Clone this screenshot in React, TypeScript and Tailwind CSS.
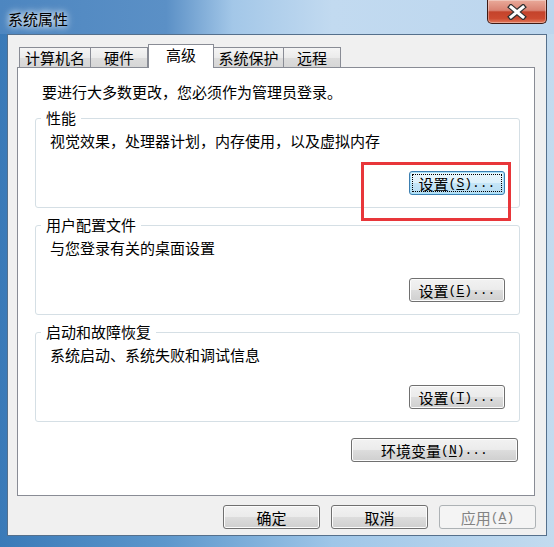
import type { ReactNode } from "react";

function Mn({ zh, k, tail = "..." }: { zh: string; k: string; tail?: string }) {
  return (
    <>
      <span>{zh}</span>
      <span className="font-['Liberation_Mono',monospace] text-[13px]">
        (<u className="underline-offset-2">{k}</u>){tail}
      </span>
    </>
  );
}

function WinButton({
  children,
  width,
  focused = false,
  disabled = false,
}: {
  children: ReactNode;
  width: string;
  focused?: boolean;
  disabled?: boolean;
}) {
  const look = disabled
    ? "border-[#adb2b5] bg-[#f4f4f4] text-[#838383]"
    : focused
      ? "border-[#3c7fb1] bg-[linear-gradient(180deg,#ebf7fd_0%,#dcf0fa_50%,#c6e6f7_50%,#b5dcf2_100%)] shadow-[inset_0_0_0_1px_#a9e2fa]"
      : "border-[#707070] bg-[linear-gradient(180deg,#f2f2f2_0%,#ebebeb_50%,#dddddd_50%,#cfcfcf_100%)] shadow-[inset_0_0_0_1px_#fcfcfc]";
  return (
    <button
      type="button"
      className={`relative h-[24px] ${width} rounded-[3px] border flex items-center justify-center leading-none ${look}`}
    >
      {focused && <span className="absolute inset-[2px] border border-dotted border-black" />}
      {children}
    </button>
  );
}

function Group({ title, desc, button }: { title: string; desc: string; button: ReactNode }) {
  return (
    <fieldset className="w-[485px] border border-[#d5dfe5] rounded-[3px] pb-[12px]">
      <legend className="ml-[5px] px-[5px] leading-[20px]">{title}</legend>
      <p className="pl-[14px] mt-[3px] leading-[20px]">{desc}</p>
      <div className="flex justify-end pr-[14px] mt-[20px]">{button}</div>
    </fieldset>
  );
}

const tabs = [
  { label: "计算机名", w: "w-[72px]", ml: "" },
  { label: "硬件", w: "w-[58px]", ml: "-ml-px" },
  { label: "高级", w: "w-[66px]", ml: "", active: true },
  { label: "系统保护", w: "w-[71px]", ml: "-ml-px" },
  { label: "远程", w: "w-[58px]", ml: "-ml-px" },
];

export default function App() {
  return (
    <div className="w-[554px] h-[547px] flex flex-col overflow-hidden bg-[linear-gradient(90deg,#3a7ab8_0%,#5d97cc_30%,#9fc6e8_60%,#c3dbef_100%)] font-['Noto_Sans_CJK_SC',sans-serif] text-[15px] text-black">
      {/* title bar */}
      <div className="h-[34px] flex items-start justify-between bg-[linear-gradient(90deg,#4d86c0_0%,#5b90c6_30%,#a3c7e8_42%,#c2daf0_60%,#bcd6ee_100%)]">
        <div className="pl-[8px] pt-[9px] leading-[20px] [text-shadow:0_0_6px_#ffffff,0_0_10px_#ffffff]">
          系统属性
        </div>
        <div className="mr-[7px] w-[60px] h-[24px] rounded-b-[5px] border border-t-0 border-[#3d1a14] bg-[linear-gradient(180deg,#e9aa9a_0%,#d98272_45%,#c4432b_52%,#cc4a30_80%,#e27a5c_100%)] shadow-[inset_0_0_0_1px_#ffffff55] flex items-center justify-center">
          <svg width="20" height="16" viewBox="0 0 20 16">
            <path d="M4 3 L16 13 M16 3 L4 13" stroke="#303030" strokeWidth="5.5" strokeLinecap="square" fill="none" />
            <path d="M4 3 L16 13 M16 3 L4 13" stroke="#ffffff" strokeWidth="3" strokeLinecap="square" fill="none" />
          </svg>
        </div>
      </div>

      {/* client area */}
      <div className="mx-[7px] h-[502px] border border-[#55708c] bg-[#f0f0f0] flex flex-col">
        {/* tabs */}
        <div className="pl-[11px] pt-[9px] h-[32px] flex items-end">
          {tabs.map((t) =>
            t.active ? (
              <div
                key={t.label}
                className={`relative z-10 -mb-px h-[24px] ${t.w} border border-b-0 border-[#898c95] bg-white leading-[20px] text-center`}
              >
                {t.label}
              </div>
            ) : (
              <div
                key={t.label}
                className={`h-[20px] ${t.w} ${t.ml} border border-b-0 border-[#898c95] bg-[linear-gradient(180deg,#f5f5f5_0%,#ebebeb_50%,#dddddd_51%,#d6d6d6_100%)] flex items-center justify-center leading-none`}
              >
                {t.label}
              </div>
            ),
          )}
        </div>

        {/* tab page */}
        <div className="relative ml-[9px] w-[518px] h-[429px] border border-[#898c95] bg-white flex flex-col">
          <p className="pl-[24px] mt-[14px] leading-[20px]">要进行大多数更改，您必须作为管理员登录。</p>

          <div className="ml-[17px] mt-[6px] flex flex-col gap-[7px]">
            <Group
              title="性能"
              desc="视觉效果，处理器计划，内存使用，以及虚拟内存"
              button={
                <WinButton width="w-[96px]" focused>
                  <Mn zh="设置" k="S" />
                </WinButton>
              }
            />
            <Group
              title="用户配置文件"
              desc="与您登录有关的桌面设置"
              button={
                <WinButton width="w-[96px]">
                  <Mn zh="设置" k="E" />
                </WinButton>
              }
            />
            <Group
              title="启动和故障恢复"
              desc="系统启动、系统失败和调试信息"
              button={
                <WinButton width="w-[96px]">
                  <Mn zh="设置" k="T" />
                </WinButton>
              }
            />
          </div>

          <div className="mt-[16px] flex justify-end pr-[16px]">
            <WinButton width="w-[167px]">
              <Mn zh="环境变量" k="N" />
            </WinButton>
          </div>

          {/* red highlight */}
          <div className="absolute left-[343px] top-[94px] w-[150px] h-[59px] border-[3px] border-[#e8363a]" />
        </div>

        {/* dialog buttons */}
        <div className="mt-[9px] flex justify-end gap-[11px] pr-[10px]">
          <WinButton width="w-[97px]">确定</WinButton>
          <WinButton width="w-[97px]">取消</WinButton>
          <WinButton width="w-[97px]" disabled>
            <Mn zh="应用" k="A" tail="" />
          </WinButton>
        </div>
      </div>
    </div>
  );
}
